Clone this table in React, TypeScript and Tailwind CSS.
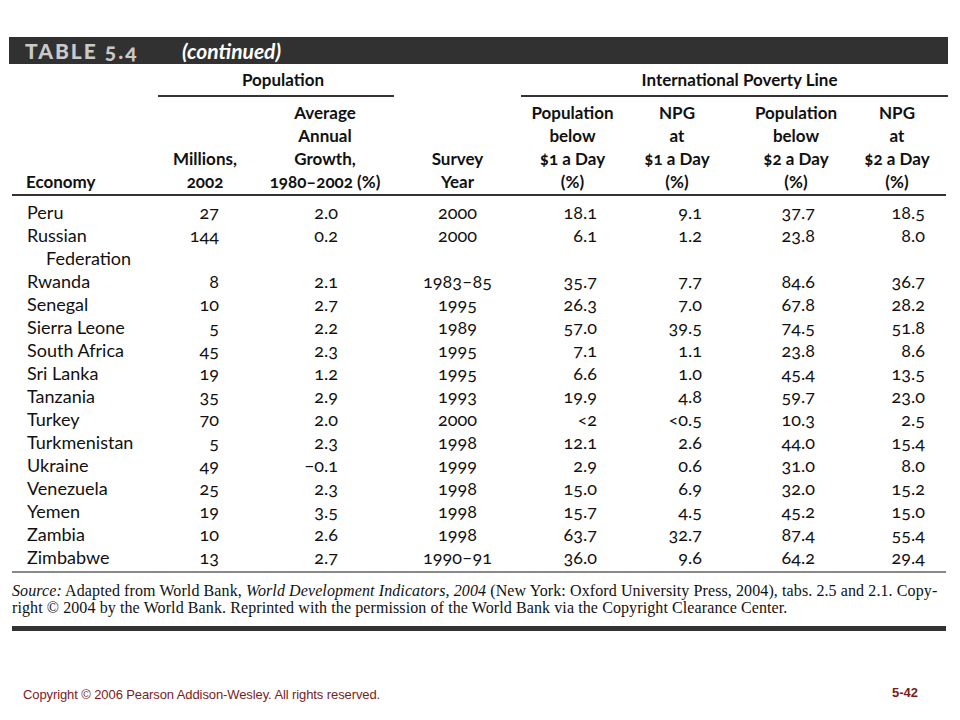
import React from 'react';

const rows: [string, string, string, string, string, string, string, string][] = [
  ['Peru', '27', '2.0', '2000', '18.1', '9.1', '37.7', '18.5'],
  ['Russian', '144', '0.2', '2000', '6.1', '1.2', '23.8', '8.0'],
  ['Federation', '', '', '', '', '', '', ''],
  ['Rwanda', '8', '2.1', '1983–85', '35.7', '7.7', '84.6', '36.7'],
  ['Senegal', '10', '2.7', '1995', '26.3', '7.0', '67.8', '28.2'],
  ['Sierra Leone', '5', '2.2', '1989', '57.0', '39.5', '74.5', '51.8'],
  ['South Africa', '45', '2.3', '1995', '7.1', '1.1', '23.8', '8.6'],
  ['Sri Lanka', '19', '1.2', '1995', '6.6', '1.0', '45.4', '13.5'],
  ['Tanzania', '35', '2.9', '1993', '19.9', '4.8', '59.7', '23.0'],
  ['Turkey', '70', '2.0', '2000', '<2', '<0.5', '10.3', '2.5'],
  ['Turkmenistan', '5', '2.3', '1998', '12.1', '2.6', '44.0', '15.4'],
  ['Ukraine', '49', '−0.1', '1999', '2.9', '0.6', '31.0', '8.0'],
  ['Venezuela', '25', '2.3', '1998', '15.0', '6.9', '32.0', '15.2'],
  ['Yemen', '19', '3.5', '1998', '15.7', '4.5', '45.2', '15.0'],
  ['Zambia', '10', '2.6', '1998', '63.7', '32.7', '87.4', '55.4'],
  ['Zimbabwe', '13', '2.7', '1990–91', '36.0', '9.6', '64.2', '29.4'],
];

// column widths from x=12: economy, millions, growth, year, $1 pop, $1 npg, $2 pop, $2 npg
const cols = 'grid grid-cols-[146px_94px_142px_127px_103px_106px_132px_70px_1fr]';

export default function App() {
  return (
    <div className="w-[960px] h-[720px] bg-white text-[#111] font-['Lato','Noto_Sans',sans-serif] oldstyle-nums">
      <div className="pt-[37px] pl-[9px] pr-[12px]">
        <div className="h-[27px] bg-[#313131] flex items-center">
          <span className="ml-[16px] w-[157px] text-[21px] font-black tracking-[2px] text-[#c9c9c9] leading-none">TABLE 5.4</span>
          <span className="text-[21px] font-bold italic text-white leading-none">(continued)</span>
        </div>
      </div>

      <div className="mx-[12px] w-[934px]">
        {/* group headers */}
        <div className="flex h-[33px] items-end font-bold text-[17px]">
          <div className="w-[146px]" />
          <div className="w-[236px] border-b-2 border-[#333] h-full flex items-center justify-center pl-[14px]">Population</div>
          <div className="w-[127px]" />
          <div className="flex-1 border-b-2 border-[#333] h-full flex items-center justify-center pl-[10px] mr-[-2px]">International Poverty Line</div>
        </div>

        {/* column headers */}
        <div className={`${cols} pt-[4px] pb-[1px] border-b-2 border-[#333] font-bold text-[17px] leading-[23px] items-end text-center`}>
          <div className="text-left pl-[14px]">Economy</div>
          <div>Millions,<br />2002</div>
          <div className="pl-[4px]">Average<br />Annual<br />Growth,<br />1980–2002 (%)</div>
          <div>Survey<br />Year</div>
          <div>Population<br />below<br />$1 a Day<br />(%)</div>
          <div>NPG<br />at<br />$1 a Day<br />(%)</div>
          <div>Population<br />below<br />$2 a Day<br />(%)</div>
          <div>NPG<br />at<br />$2 a Day<br />(%)</div>
          <div />
        </div>

        {/* data */}
        <div className="pt-[5px] pb-[2px] border-b-2 border-[#888] text-[18px] leading-[23px]">
          {rows.map((r, i) => (
            <div key={i} className={cols}>
              <div className={r[0] === 'Federation' ? 'pl-[34px]' : 'pl-[15px]'}>{r[0]}</div>
              <div className="text-right pr-[33px]">{r[1]}</div>
              <div className="text-right pr-[56px]">{r[2]}</div>
              <div className="text-center">{r[3]}</div>
              <div className="text-right pr-[27px]">{r[4]}</div>
              <div className="text-right pr-[28px]">{r[5]}</div>
              <div className="text-right pr-[47px]">{r[6]}</div>
              <div className="text-right pr-[7px]">{r[7]}</div>
              <div />
            </div>
          ))}
        </div>

        {/* source */}
        <div className="pt-[9px] font-['Liberation_Serif',serif] text-[16px] leading-[17px] tracking-[0.1px] whitespace-nowrap">
          <div>
            <i>Source:</i> Adapted from World Bank, <i>World Development Indicators, 2004</i> (New York: Oxford University Press, 2004), tabs. 2.5 and 2.1. Copy-
          </div>
          <div>right © 2004 by the World Bank. Reprinted with the permission of the World Bank via the Copyright Clearance Center.</div>
        </div>
        <div className="mt-[10px] h-[5px] bg-[#333]" />
      </div>

      <div className="mt-[54px] flex items-center justify-between pl-[23px] pr-[42px] font-['Liberation_Sans',sans-serif] text-[#7a1c1c]">
        <span className="text-[13px] tracking-[-0.1px]">Copyright © 2006 Pearson Addison-Wesley. All rights reserved.</span>
        <span className="text-[13px] font-bold -mt-[4px]">5-42</span>
      </div>
    </div>
  );
}
